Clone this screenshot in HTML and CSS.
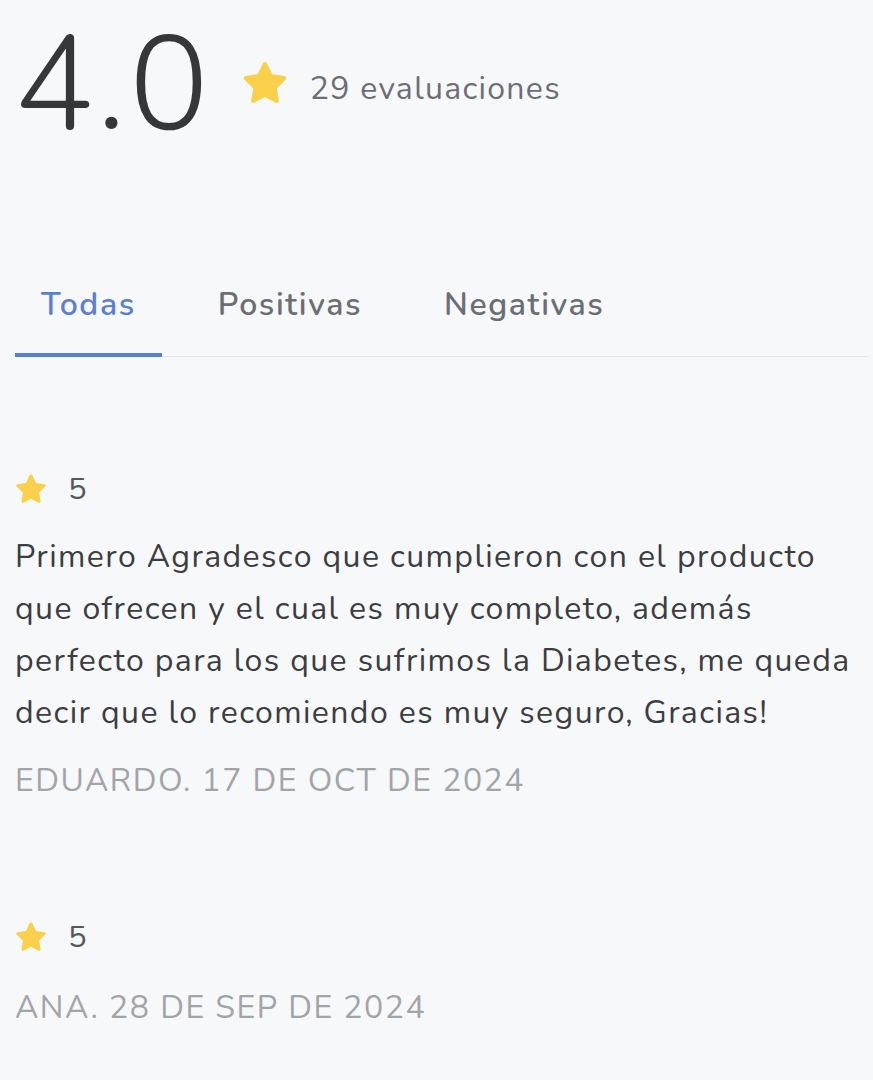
FILE: index.html
```html
<!DOCTYPE html>
<html lang="es">
<head>
<meta charset="utf-8">
<link rel="stylesheet" href="styles.css">
</head>
<body>
<main class="page">
  <section class="summary">
    <div class="score">4.0</div>
    <svg class="star big" viewBox="0 0 24 24"><path d="M12 2.3c.4 0 .7.2.9.6l2.5 5.1 5.6.8c.8.1 1.1 1.1.5 1.7l-4.1 4 1 5.6c.1.8-.7 1.4-1.4 1l-5-2.6-5 2.6c-.7.4-1.6-.2-1.4-1l1-5.6-4.1-4c-.6-.6-.3-1.6.5-1.7l5.6-.8 2.5-5.1c.2-.4.5-.6.9-.6z"/></svg>
    <span class="count">29 evaluaciones</span>
  </section>

  <nav class="tabs">
    <span class="tab active">Todas</span>
    <span class="tab">Positivas</span>
    <span class="tab">Negativas</span>
  </nav>

  <article class="review">
    <div class="rating">
      <svg class="star small" viewBox="0 0 24 24"><path d="M12 2.3c.4 0 .7.2.9.6l2.5 5.1 5.6.8c.8.1 1.1 1.1.5 1.7l-4.1 4 1 5.6c.1.8-.7 1.4-1.4 1l-5-2.6-5 2.6c-.7.4-1.6-.2-1.4-1l1-5.6-4.1-4c-.6-.6-.3-1.6.5-1.7l5.6-.8 2.5-5.1c.2-.4.5-.6.9-.6z"/></svg>
      <span>5</span>
    </div>
    <p class="text">Primero Agradesco que cumplieron con el producto que ofrecen y el cual es muy completo, además perfecto para los que sufrimos la Diabetes, me queda decir que lo recomiendo es muy seguro, Gracias!</p>
    <p class="meta">EDUARDO. 17 DE OCT DE 2024</p>
  </article>

  <article class="review">
    <div class="rating">
      <svg class="star small" viewBox="0 0 24 24"><path d="M12 2.3c.4 0 .7.2.9.6l2.5 5.1 5.6.8c.8.1 1.1 1.1.5 1.7l-4.1 4 1 5.6c.1.8-.7 1.4-1.4 1l-5-2.6-5 2.6c-.7.4-1.6-.2-1.4-1l1-5.6-4.1-4c-.6-.6-.3-1.6.5-1.7l5.6-.8 2.5-5.1c.2-.4.5-.6.9-.6z"/></svg>
      <span>5</span>
    </div>
    <p class="meta">ANA. 28 DE SEP DE 2024</p>
  </article>
</main>
</body>
</html>
```
FILE: styles.css
```css
html, body {
  margin: 0;
  padding: 0;
  background: #f7f8fa;
}
body {
  font-family: "Nunito", "Open Sans", "Noto Sans", sans-serif;
  color: #3c3d41;
}
.page {
  padding: 0 18px 0 15px;
}
.summary {
  display: flex;
  align-items: center;
  height: 176px;
}
.score {
  font-size: 133px;
  font-weight: 300;
  line-height: 1.3;
  color: #36373b;
  padding-bottom: 4px;
  letter-spacing: 3px;
  margin-left: -1px;
}
.star {
  fill: #fad04b;
  display: block;
  flex: none;
}
.star.big {
  width: 52px;
  height: 52px;
  margin-left: 27px;
  margin-bottom: 10px;
}
.count {
  margin-left: 19px;
  font-size: 32px;
  letter-spacing: 1.3px;
  color: #6c6e73;
}
.tabs {
  margin-top: 84px;
  margin-right: -13px;
  display: flex;
  border-bottom: 1px solid #e4e6ea;
}
.tab {
  font-size: 32px;
  font-weight: 600;
  letter-spacing: 1.6px;
  color: #6b6e75;
  padding: 23px 26px 27px;
  margin-bottom: -1px;
  border-bottom: 4px solid transparent;
  margin-right: 30px;
}
.tab.active {
  color: #5b7fd0;
  border-bottom-color: #5b7fd0;
}
.review {
  padding-top: 111px;
}
.rating {
  display: flex;
  align-items: center;
  gap: 19px;
  font-size: 31px;
  letter-spacing: 1.5px;
  color: #55575c;
}
.star.small {
  width: 36px;
  height: 36px;
  margin-left: -2px;
}
.text {
  margin: 21px 0 0;
  font-size: 32px;
  letter-spacing: 1.4px;
  line-height: 52px;
  color: #3c3d41;
}
.meta {
  margin: 16px 0 0;
  font-size: 32px;
  letter-spacing: 1.5px;
  line-height: 52px;
  color: #a2a4a8;
}
.review + .review {
  padding-top: 109px;
}
.review + .review .meta {
  margin-top: 24px;
}
```
